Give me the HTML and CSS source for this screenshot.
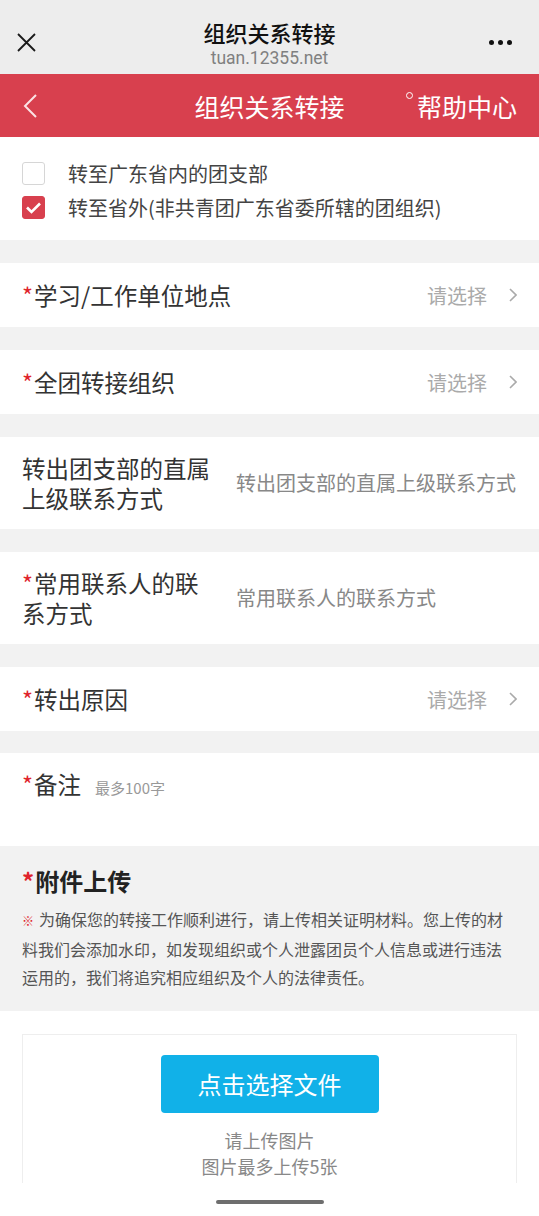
FILE: index.html
```html
<!DOCTYPE html>
<html lang="zh-CN">
<head>
    <meta charset="UTF-8">
    <meta name="viewport" content="width=device-width, initial-scale=1.0">
    <title>组织关系转接</title>
    <link rel="stylesheet" href="styles.css">
</head>
<body>
<div class="screen">
    <div class="page">

        <!-- WeChat top bar -->
        <div class="wx-bar">
            <svg class="wx-close" width="19" height="19" viewBox="0 0 19 19">
                <path d="M1 1 L18 18 M18 1 L1 18" stroke="#1a1a1a" stroke-width="1.8" fill="none"/>
            </svg>
            <div class="wx-title">
                <div class="wx-name">组织关系转接</div>
                <div class="wx-url">tuan.12355.net</div>
            </div>
            <div class="wx-more"><i></i><i></i><i></i></div>
        </div>

        <!-- Page header -->
        <div class="header">
            <svg class="back" width="14" height="24" viewBox="0 0 14 24">
                <path d="M13 1 L2 12 L13 23" stroke="#fbe3e5" stroke-width="2" fill="none"/>
            </svg>
            <div class="header-title">组织关系转接</div>
            <div class="help"><span class="help-dot"></span>帮助中心</div>
        </div>

        <!-- Transfer type -->
        <div class="check-section">
            <div class="check-item">
                <span class="box"></span>
                <span>转至广东省内的团支部</span>
            </div>
            <div class="check-item">
                <span class="box on">
                    <svg width="23" height="23" viewBox="0 0 23 23">
                        <path d="M5 11.5 L9.5 16 L18 7.5" stroke="#fff" stroke-width="2.6" fill="none"/>
                    </svg>
                </span>
                <span>转至省外(非共青团广东省委所辖的团组织)</span>
            </div>
        </div>

        <div class="field">
            <div class="field-label"><span class="req">*</span>学习/工作单位地点</div>
            <div class="select">请选择
                <svg width="8" height="14" viewBox="0 0 8 14"><path d="M1 1 L7 7 L1 13" stroke="#aaa" stroke-width="1.6" fill="none"/></svg>
            </div>
        </div>

        <div class="field">
            <div class="field-label"><span class="req">*</span>全团转接组织</div>
            <div class="select">请选择
                <svg width="8" height="14" viewBox="0 0 8 14"><path d="M1 1 L7 7 L1 13" stroke="#aaa" stroke-width="1.6" fill="none"/></svg>
            </div>
        </div>

        <div class="field tall">
            <div class="field-label narrow">转出团支部的直属上级联系方式</div>
            <div class="placeholder">转出团支部的直属上级联系方式</div>
        </div>

        <div class="field tall">
            <div class="field-label narrow"><span class="req">*</span>常用联系人的联系方式</div>
            <div class="placeholder">常用联系人的联系方式</div>
        </div>

        <div class="field">
            <div class="field-label"><span class="req">*</span>转出原因</div>
            <div class="select">请选择
                <svg width="8" height="14" viewBox="0 0 8 14"><path d="M1 1 L7 7 L1 13" stroke="#aaa" stroke-width="1.6" fill="none"/></svg>
            </div>
        </div>

        <div class="field remark">
            <div class="field-label"><span class="req">*</span>备注</div>
            <span class="hint">最多100字</span>
        </div>

        <!-- Attachments -->
        <div class="attach">
            <div class="attach-title"><span class="req">*</span>附件上传</div>
            <p class="attach-note"><span class="mark">※</span>为确保您的转接工作顺利进行，请上传相关证明材料。您上传的材料我们会添加水印，如发现组织或个人泄露团员个人信息或进行违法运用的，我们将追究相应组织及个人的法律责任。</p>
        </div>

        <div class="upload">
            <div class="upload-box">
                <div class="upload-btn">点击选择文件</div>
                <div class="upload-tip">请上传图片<br>图片最多上传5张</div>
            </div>
        </div>

    </div>
    <div class="home-bar"><span></span></div>
</div>
</body>
</html>
```

FILE: styles.css
```css
body {
    margin: 0;
    font-family: "Noto Sans CJK SC", "Noto Sans", sans-serif;
    background: #fff;
}
.screen {
    width: 539px;
    height: 1216px;
    display: flex;
    flex-direction: column;
    overflow: hidden;
}
.page {
    flex: 1;
    overflow: hidden;
    background: #f2f2f2;
}

/* wechat bar */
.wx-bar {
    height: 74px;
    box-sizing: border-box;
    background: #ededed;
    display: grid;
    grid-template-columns: 1fr auto 1fr;
    align-items: start;
    padding: 17px 0 0;
}
.wx-close {
    margin: 16px 0 0 17px;
}
.wx-title {
    text-align: center;
}
.wx-name {
    font-size: 22px;
    line-height: 30px;
    font-weight: 500;
    color: #111;
}
.wx-url {
    font-family: Roboto, "Noto Sans", sans-serif;
    font-size: 17.5px;
    line-height: 23px;
    color: #808080;
}
.wx-more {
    justify-self: end;
    display: flex;
    gap: 4px;
    margin: 23px 27px 0 0;
}
.wx-more i {
    width: 5px;
    height: 5px;
    border-radius: 50%;
    background: #111;
}

/* red header */
.header {
    height: 63px;
    background: #d8404e;
    display: grid;
    grid-template-columns: 1fr auto 1fr;
    align-items: center;
    color: #fff;
}
.back {
    margin-left: 23px;
}
.header-title {
    font-size: 25px;
    line-height: 34px;
}
.help {
    justify-self: end;
    display: flex;
    align-items: flex-start;
    padding-right: 22px;
    font-size: 25px;
    line-height: 34px;
}
.help-dot {
    width: 5px;
    height: 5px;
    border: 1.5px solid #fff;
    border-radius: 50%;
    margin: 3px 4px 0 0;
}

/* checkboxes */
.check-section {
    background: #fff;
    padding: 19px 22px 16px;
}
.check-item {
    display: flex;
    align-items: center;
    height: 34px;
    gap: 23px;
    font-size: 20px;
    color: #444;
}
.box {
    width: 23px;
    height: 23px;
    box-sizing: border-box;
    border: 1px solid #d6d6d6;
    border-radius: 3px;
    flex-shrink: 0;
}
.box.on {
    background: #d8404e;
    border-color: #d8404e;
}
.box svg {
    display: block;
    margin: -1px;
}

/* form rows */
.field {
    margin-top: 23px;
    background: #fff;
    display: flex;
    align-items: center;
    height: 64px;
    box-sizing: border-box;
    padding: 0 22px;
}
.field.tall {
    height: 92px;
}
.field-label {
    font-size: 23.5px;
    line-height: 30px;
    color: #333;
    flex-shrink: 0;
}
.field-label.narrow {
    width: 189px;
}
.req {
    color: #e0242c;
    margin-right: 1px;
}
.select {
    margin-left: auto;
    display: flex;
    align-items: center;
    gap: 22px;
    font-size: 20px;
    color: #aaa;
}
.placeholder {
    margin-left: 25px;
    font-size: 20px;
    line-height: 30px;
    color: #888;
    white-space: nowrap;
}
.field.remark {
    align-items: baseline;
    height: 93px;
    padding: 16px 22px 0;
    margin-top: 22px;
}
.hint {
    margin-left: 14px;
    font-size: 15px;
    color: #999;
}

/* attachments */
.attach {
    padding: 19px 22px 20px;
}
.attach-title {
    font-size: 24px;
    line-height: 32px;
    font-weight: bold;
    color: #222;
}
.attach-note {
    margin: 8px 0 0;
    font-size: 16px;
    line-height: 28px;
    color: #555;
}
.mark {
    color: #e0242c;
    font-size: 12px;
    margin-right: 5px;
}

.upload {
    background: #fff;
    padding: 23px 22px 0;
}
.upload-box {
    border: 1px solid #eee;
    padding: 20px 0 60px;
    text-align: center;
}
.upload-btn {
    display: inline-block;
    width: 218px;
    height: 58px;
    line-height: 58px;
    background: #11b1e8;
    border-radius: 4px;
    color: #fff;
    font-size: 24px;
}
.upload-tip {
    margin-top: 14px;
    font-size: 18px;
    line-height: 26px;
    color: #888;
}

/* home indicator */
.home-bar {
    height: 33px;
    box-sizing: border-box;
    background: #fff;
    display: flex;
    justify-content: center;
    padding-top: 17px;
}
.home-bar span {
    width: 108px;
    height: 4px;
    border-radius: 2px;
    background: #6e6e6e;
}
```
